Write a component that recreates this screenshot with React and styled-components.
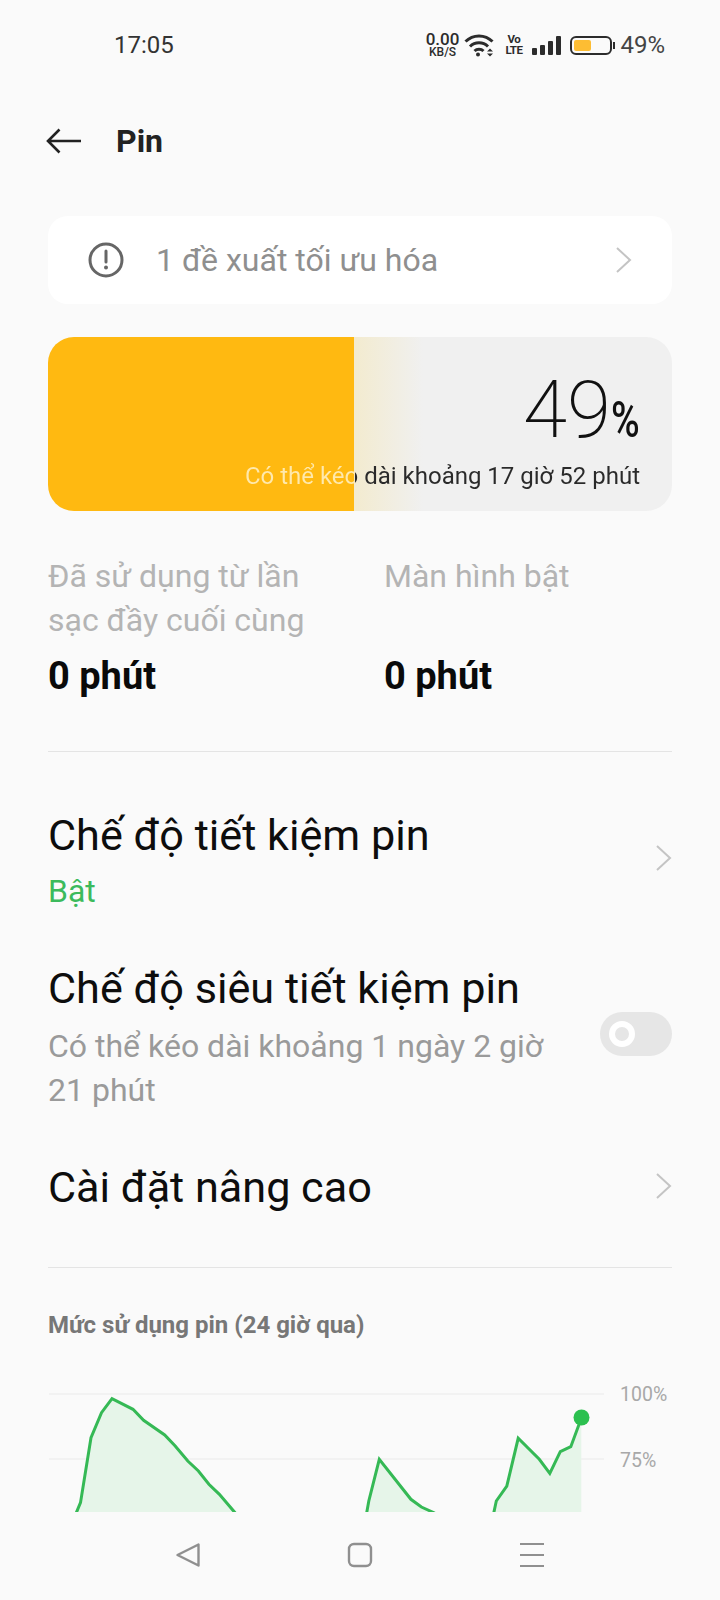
import React from 'react';
import styled, { createGlobalStyle } from 'styled-components';

const GlobalStyle = createGlobalStyle`
html, body {
  margin: 0;
  padding: 0;
  background: #fafafa;
}
* {
  box-sizing: border-box;
}
`;

const line1 = 'M76.3 1511.7L80.5 1501.7L91 1436.7L101.5 1411.7L112 1397.7L133 1408.3L143.6 1419.3L164.7 1434L175.2 1445L187.8 1460L198.4 1470L208.9 1483.3L219.4 1493.3L235 1511.7L250 1540';
const line2 = 'M366.7 1511.7L368.8 1500L379.3 1458.3L410.9 1498.3L421.4 1506L434 1511.7L445 1520';
const line3 = 'M493.8 1511.7L496.3 1500L506.8 1485L518.2 1437.3L539.3 1458.3L549.8 1472.3L560.3 1450.7L570.8 1445.7L581.3 1417.3';

const Chevron = () => (
  <ChevronSvg viewBox="0 0 20 30">
    <path d="M3 3L16 15L3 27" fill="none" stroke="#c4c4c4" strokeWidth="2" />
  </ChevronSvg>
);

function App() {
  return (
    <Page>
      <GlobalStyle />
      <StatusBar>
        <Clock>17:05</Clock>
        <StatusIcons>
          <Speed>
            <SpeedValue>0.00</SpeedValue>
            <SpeedUnit>KB/S</SpeedUnit>
          </Speed>
          <svg width="31" height="24" viewBox="0 0 31 24">
            <path d="M1.5 8.5C9 1 21 1 28.5 8.5" fill="none" stroke="#2c2c2c" strokeWidth="3" />
            <path d="M6 13.5C11 8.5 19 8.5 24 13.5" fill="none" stroke="#2c2c2c" strokeWidth="3" />
            <path d="M10.5 18C13 15.5 17 15.5 19.5 18" fill="none" stroke="#2c2c2c" strokeWidth="3" />
            <circle cx="14" cy="21.5" r="2" fill="#2c2c2c" />
            <path d="M23 18.5L26 15.5L29 18.5Z M23 20.5L26 23.5L29 20.5Z" fill="#2c2c2c" />
          </svg>
          <Volte>
            <span>Vo</span>
            <span>LTE</span>
          </Volte>
          <Signal>
            <SignalBar $h={7} />
            <SignalBar $h={10} />
            <SignalBar $h={14} />
            <SignalBar $h={19} />
          </Signal>
          <Battery>
            <BatteryLevel />
          </Battery>
          <StatusPercent>49%</StatusPercent>
        </StatusIcons>
      </StatusBar>

      <Scroll>
        <Header>
          <svg width="36" height="26" viewBox="0 0 36 26">
            <path d="M35 13H2M13.5 1.5L2 13L13.5 24.5" fill="none" stroke="#222" strokeWidth="2.6" />
          </svg>
          <Title>Pin</Title>
        </Header>

        <Content>
          <SuggestCard>
            <svg width="36" height="36" viewBox="0 0 36 36">
              <circle cx="18" cy="18" r="16" fill="none" stroke="#666" strokeWidth="3" />
              <path d="M18 9V20" stroke="#666" strokeWidth="3" strokeLinecap="round" />
              <circle cx="18" cy="25.5" r="2" fill="#666" />
            </svg>
            <SuggestText>1 đề xuất tối ưu hóa</SuggestText>
            <Chevron />
          </SuggestCard>

          <BatteryCard>
            <BigPercent>
              49<small>%</small>
            </BigPercent>
            <Estimate>Có thể kéo dài khoảng 17 giờ 52 phút</Estimate>
          </BatteryCard>

          <Stats>
            <Stat>
              <StatLabel>Đã sử dụng từ lần sạc đầy cuối cùng</StatLabel>
              <StatValue>0 phút</StatValue>
            </Stat>
            <Stat>
              <StatLabel>Màn hình bật</StatLabel>
              <StatValue>0 phút</StatValue>
            </Stat>
          </Stats>

          <Divider />

          <Rows>
            <Row $gap={48}>
              <RowText>
                <RowTitle>Chế độ tiết kiệm pin</RowTitle>
                <RowSub $green>Bật</RowSub>
              </RowText>
              <Chevron />
            </Row>
            <Row $gap={48}>
              <RowText>
                <RowTitle>Chế độ siêu tiết kiệm pin</RowTitle>
                <RowSub>Có thể kéo dài khoảng 1 ngày 2 giờ 21 phút</RowSub>
              </RowText>
              <Toggle>
                <Knob />
              </Toggle>
            </Row>
            <Row $gap={51}>
              <RowText>
                <RowTitle>Cài đặt nâng cao</RowTitle>
              </RowText>
              <Chevron />
            </Row>
          </Rows>

          <Divider />

          <ChartTitle>Mức sử dụng pin (24 giờ qua)</ChartTitle>
          <Chart viewBox="48 1380 624 260">
            <path d="M49 1393H604M49 1458H604" stroke="#f2f2f2" strokeWidth="2" fill="none" />
            <path d={line1 + 'V1640H76Z'} fill="#e6f5e9" />
            <path d={line2 + 'V1640H366Z'} fill="#e6f5e9" />
            <path d={line3 + 'V1640H493Z'} fill="#e6f5e9" />
            <path d={line1} stroke="#35b955" strokeWidth="3" fill="none" />
            <path d={line2} stroke="#35b955" strokeWidth="3" fill="none" />
            <path d={line3} stroke="#35b955" strokeWidth="3" fill="none" />
            <circle cx="581.5" cy="1416.5" r="8" fill="#2cc04f" />
            <ChartLabel x="620" y="1400">100%</ChartLabel>
            <ChartLabel x="620" y="1466">75%</ChartLabel>
          </Chart>
        </Content>
      </Scroll>

      <NavBar>
        <svg width="26" height="26" viewBox="0 0 26 26">
          <path d="M23.5 2.5V23.5L2.5 13Z" fill="none" stroke="#8f8f8f" strokeWidth="2.4" strokeLinejoin="round" />
        </svg>
        <svg width="26" height="26" viewBox="0 0 26 26">
          <rect x="2" y="2" width="22" height="22" rx="5" fill="none" stroke="#8f8f8f" strokeWidth="2.4" />
        </svg>
        <svg width="26" height="26" viewBox="0 0 26 26">
          <path d="M1 2H25M1 13H25M1 24H25" fill="none" stroke="#8f8f8f" strokeWidth="2.2" />
        </svg>
      </NavBar>
    </Page>
  );
}
export default App;

const Page = styled.div`
width: 720px;
height: 1600px;
display: flex;
flex-direction: column;
overflow: hidden;
background: #fafafa;
font-family: Roboto, "Noto Sans", sans-serif;
color: #111;
`;
const StatusBar = styled.div`
height: 90px;
flex: none;
display: flex;
align-items: center;
justify-content: space-between;
padding: 0 55px 0 114px;
`;
const Clock = styled.div`
font-size: 24px;
color: #333;
`;
const StatusIcons = styled.div`
display: flex;
align-items: center;
gap: 10px;
`;
const Speed = styled.div`
display: flex;
flex-direction: column;
align-items: center;
margin-right: -5px;
color: #2c2c2c;
font-weight: 500;
`;
const SpeedValue = styled.span`
font-size: 17px;
line-height: 15px;
`;
const SpeedUnit = styled.span`
font-size: 12px;
line-height: 11px;
`;
const Volte = styled.div`
display: flex;
flex-direction: column;
align-items: center;
font-size: 11.5px;
line-height: 11px;
font-weight: 700;
letter-spacing: -0.5px;
color: #2c2c2c;
`;
const Signal = styled.div`
display: flex;
align-items: flex-end;
gap: 3px;
height: 20px;
`;
const SignalBar = styled.div`
width: 5px;
height: ${props => props.$h}px;
background: #2c2c2c;
border-radius: 1px;
`;
const Battery = styled.div`
position: relative;
width: 42px;
height: 19px;
margin-left: -1px;
margin-right: -2px;
border: 2px solid #2c2c2c;
border-radius: 6px;
padding: 2px;
&::after {
  content: "";
  position: absolute;
  right: -5px;
  top: 4px;
  width: 2px;
  height: 7px;
  background: #2c2c2c;
}
`;
const BatteryLevel = styled.div`
width: 17px;
height: 100%;
background: #fdbd33;
border-radius: 2px;
`;
const StatusPercent = styled.div`
font-size: 24px;
color: #444;
`;
const Scroll = styled.div`
flex: 1;
min-height: 0;
overflow: hidden;
`;
const Header = styled.div`
height: 102px;
display: flex;
align-items: center;
gap: 34px;
padding-left: 46px;
`;
const Title = styled.div`
font-size: 32px;
font-weight: 700;
color: #222;
`;
const Content = styled.div`
padding: 24px 48px 0;
`;
const SuggestCard = styled.div`
height: 88px;
background: #fff;
border-radius: 20px;
display: flex;
align-items: center;
padding: 0 38px 0 40px;
`;
const SuggestText = styled.div`
flex: 1;
margin-left: 32px;
font-size: 32px;
color: #8f8f8f;
`;
const ChevronSvg = styled.svg`
width: 20px;
height: 30px;
flex: none;
`;
const BatteryCard = styled.div`
margin-top: 33px;
height: 174px;
border-radius: 26px;
background: linear-gradient(to right, #ffb911 306px, #f3ebcf 306px, #f0f0f0 375px);
display: flex;
flex-direction: column;
align-items: flex-end;
padding: 30px 32px 0 0;
`;
const BigPercent = styled.div`
font-size: 80px;
line-height: 86px;
font-weight: 200;
letter-spacing: 0;
color: #111;
small {
  display: inline-block;
  width: 29px;
  font-size: 50px;
  font-weight: 500;
  transform: scaleX(0.78);
  transform-origin: left;
}
`;
const Estimate = styled.div`
margin-top: -2px;
font-size: 24px;
line-height: 30px;
color: transparent;
background: linear-gradient(to left, #2a2a2a 285px, #ffe9ad 285px);
-webkit-background-clip: text;
background-clip: text;
`;
const Stats = styled.div`
margin-top: 43px;
padding-bottom: 53px;
display: grid;
grid-template-columns: 336px 1fr;
`;
const Stat = styled.div`
display: flex;
flex-direction: column;
justify-content: flex-start;
`;
const StatLabel = styled.div`
font-size: 32px;
line-height: 44px;
color: #b4b4b4;
width: 275px;
min-height: 88px;
`;
const StatValue = styled.div`
margin-top: 12px;
font-size: 38px;
line-height: 44px;
font-weight: 700;
color: #0a0a0a;
`;
const Divider = styled.div`
height: 1px;
background: #e4e4e4;
`;
const Rows = styled.div`
padding-top: 56px;
`;
const Row = styled.div`
display: flex;
align-items: center;
justify-content: space-between;
margin-bottom: ${props => props.$gap}px;
> svg {
  margin: -5px -2px 0 0;
}
`;
const RowText = styled.div`
flex: 1;
min-width: 0;
padding-right: 40px;
`;
const RowTitle = styled.div`
font-size: 43.2px;
line-height: 56px;
color: #0d0d0d;
`;
const RowSub = styled.div`
font-size: 32px;
line-height: 44px;
margin-top: ${props => (props.$green ? 5 : 7)}px;
color: ${props => (props.$green ? '#3cba5c' : '#9a9a9a')};
`;
const Toggle = styled.div`
flex: none;
width: 72px;
height: 44px;
margin-top: -6px;
border-radius: 22px;
background: #e6e6e6;
display: flex;
align-items: center;
padding-left: 9px;
`;
const Knob = styled.div`
width: 26px;
height: 26px;
border-radius: 50%;
border: 6px solid #fff;
`;
const ChartTitle = styled.div`
margin-top: 42px;
font-size: 24px;
line-height: 30px;
font-weight: 700;
color: #777;
`;
const Chart = styled.svg`
display: block;
margin-top: 41px;
width: 624px;
height: 260px;
`;
const ChartLabel = styled.text`
font-size: 19.5px;
fill: #a8a8a8;
font-family: Roboto, sans-serif;
`;
const NavBar = styled.div`
height: 88px;
flex: none;
background: #fafafa;
display: flex;
align-items: flex-start;
justify-content: space-between;
padding: 30px 175px 0 175px;
`;
